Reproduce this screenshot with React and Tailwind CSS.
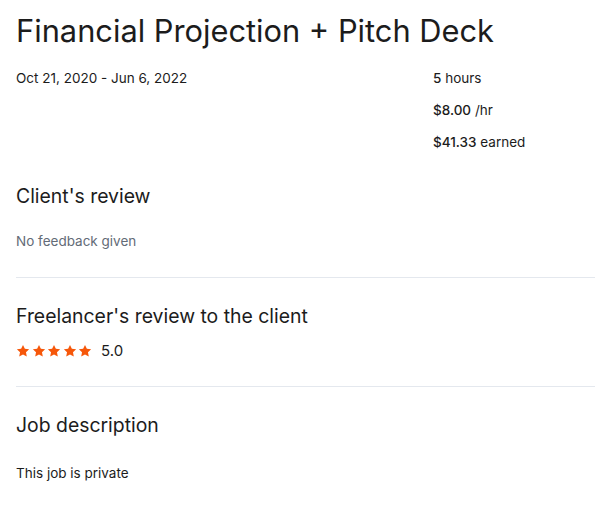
const FONT = { fontFamily: 'Inter, "Liberation Sans", Arial, sans-serif' };

function Star() {
  return (
    <svg width="14" height="14" viewBox="0 0 24 24" aria-hidden="true">
      <path
        fill="#f6570a"
        d="M12 1.5l3.2 6.7 7.3.9-5.4 5.1 1.4 7.3L12 18l-6.5 3.5 1.4-7.3-5.4-5.1 7.3-.9z"
      />
    </svg>
  );
}

function Divider() {
  return <div className="h-px bg-[#e4e8ee]" />;
}

export default function App() {
  return (
    <div className="bg-white text-[#1c1c1c] pl-4 pb-8 min-h-[509px]" style={FONT}>
      <h1 className="pt-[13px] text-[30.8px] leading-9 font-normal">
        Financial Projection + Pitch Deck
      </h1>

      <div className="mt-[19px] flex">
        <div className="flex-1 text-[13.5px] leading-5">Oct 21, 2020 - Jun 6, 2022</div>
        <div className="w-[162px] flex flex-col gap-3 text-[13.5px] leading-5">
          <div><span className="font-medium">5</span> hours</div>
          <div><span className="font-medium">$8.00</span> /hr</div>
          <div><span className="font-medium">$41.33</span> earned</div>
        </div>
      </div>

      <h2 className="mt-8 text-[19.4px] leading-6 font-normal">Client's review</h2>
      <p className="mt-[23px] text-[13.5px] leading-5 text-[#636b77]">No feedback given</p>

      <div className="mt-[26px]">
        <Divider />
      </div>

      <h2 className="mt-[26px] text-[19.4px] leading-6 font-normal">Freelancer's review to the client</h2>
      <div className="mt-[13px] flex items-center h-5">
        <div className="flex gap-[1.5px]">
          <Star />
          <Star />
          <Star />
          <Star />
          <Star />
        </div>
        <span className="ml-[9px] text-[15px]">5.0</span>
      </div>

      <div className="mt-[25px]">
        <Divider />
      </div>

      <h2 className="mt-[26px] text-[19.4px] leading-6 font-normal">Job description</h2>
      <p className="mt-[26px] text-[13.5px] leading-5">This job is private</p>
    </div>
  );
}
